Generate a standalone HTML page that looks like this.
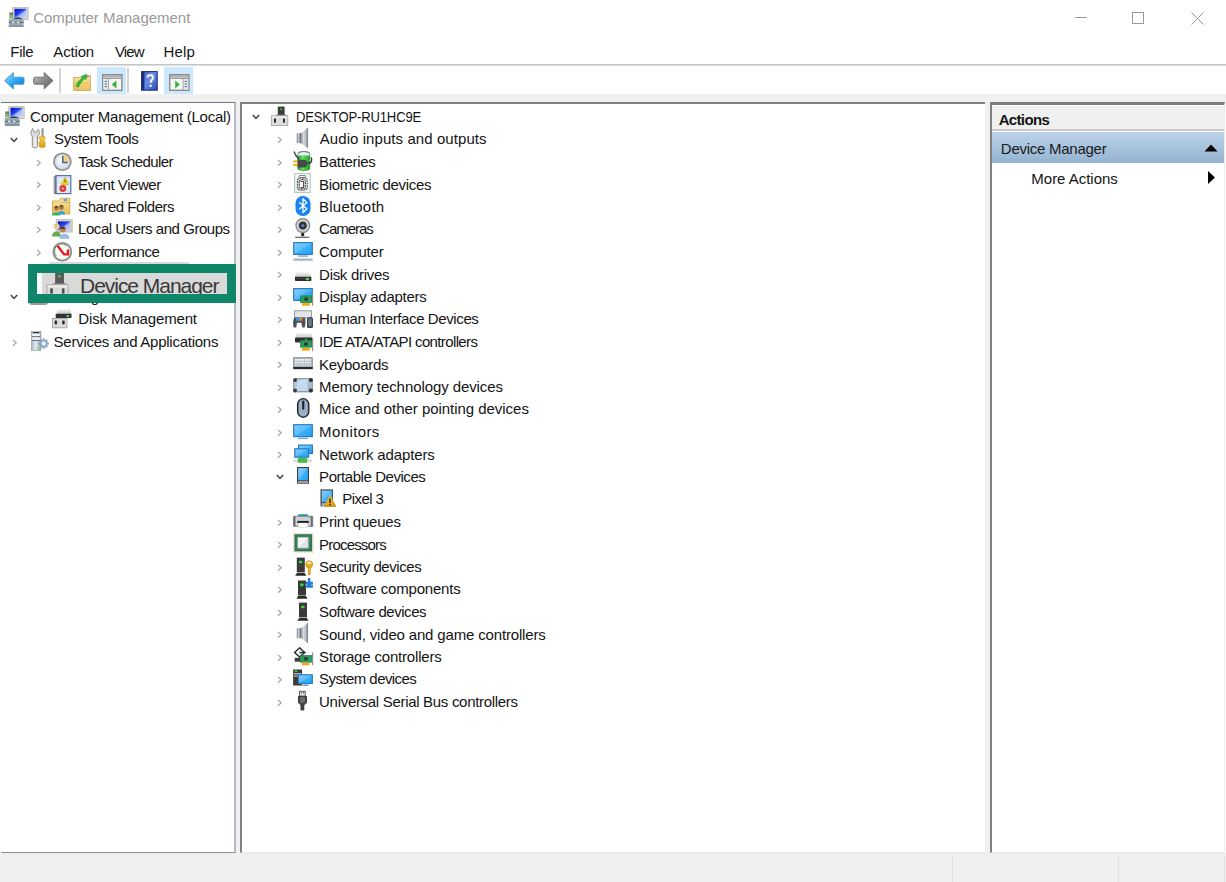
<!DOCTYPE html><html><head><meta charset="utf-8"><style>
html,body{margin:0;padding:0}
body{width:1226px;height:882px;position:relative;overflow:hidden;background:#fff;font-family:"Liberation Sans",sans-serif}
svg{display:block}
</style></head><body>
<svg width="0" height="0" style="position:absolute"><defs>
<linearGradient id="gScr" x1="0" y1="0" x2="1" y2="1"><stop offset="0" stop-color="#0008c8"/><stop offset="0.45" stop-color="#2848e8"/><stop offset="0.6" stop-color="#a8b8ff"/><stop offset="1" stop-color="#c8d4ff"/></linearGradient>
<linearGradient id="gMon" x1="0" y1="0" x2="1" y2="1"><stop offset="0" stop-color="#88d0ff"/><stop offset="0.5" stop-color="#5cbcfc"/><stop offset="0.52" stop-color="#40b0fa"/><stop offset="1" stop-color="#1ea0f4"/></linearGradient>
<linearGradient id="gSpk" x1="0" x2="1"><stop offset="0" stop-color="#8a9098"/><stop offset="0.35" stop-color="#d8dce0"/><stop offset="0.7" stop-color="#b8bcc0"/><stop offset="1" stop-color="#70767c"/></linearGradient>
<linearGradient id="gSpkB" x1="0" x2="1"><stop offset="0" stop-color="#6a7078"/><stop offset="0.4" stop-color="#c8d0d8"/><stop offset="1" stop-color="#5a6068"/></linearGradient>
<linearGradient id="gBat" x1="0" x2="1"><stop offset="0" stop-color="#2a9a30"/><stop offset="0.4" stop-color="#60e060"/><stop offset="1" stop-color="#20a028"/></linearGradient>
<linearGradient id="gGold" x1="0" y1="0" x2="0" y2="1"><stop offset="0" stop-color="#f8d048"/><stop offset="1" stop-color="#d89a10"/></linearGradient>
<linearGradient id="gBack" x1="0" y1="0" x2="1" y2="1"><stop offset="0" stop-color="#a8e4ff"/><stop offset="0.5" stop-color="#30a8f0"/><stop offset="1" stop-color="#0a70d0"/></linearGradient>
<linearGradient id="gFwd" x1="0" y1="0" x2="1" y2="1"><stop offset="0" stop-color="#c8c8c8"/><stop offset="0.5" stop-color="#8a8a8a"/><stop offset="1" stop-color="#5a5a5a"/></linearGradient>
<linearGradient id="gFold" x1="0" y1="0" x2="0" y2="1"><stop offset="0" stop-color="#fbe49a"/><stop offset="1" stop-color="#e8c060"/></linearGradient>
<linearGradient id="gHelp" x1="0" y1="0" x2="1" y2="1"><stop offset="0" stop-color="#3a60d0"/><stop offset="0.45" stop-color="#6a8ce8"/><stop offset="1" stop-color="#2a4ab8"/></linearGradient>
<linearGradient id="gSrv" x1="0" x2="1"><stop offset="0" stop-color="#a8b4c0"/><stop offset="0.5" stop-color="#e4eaf0"/><stop offset="1" stop-color="#98a4b0"/></linearGradient>
<linearGradient id="gDisk" x1="0" y1="0" x2="0" y2="1"><stop offset="0" stop-color="#f0f0f0"/><stop offset="1" stop-color="#c8c8c8"/></linearGradient>
<radialGradient id="gFace" cx="0.4" cy="0.4" r="0.7"><stop offset="0" stop-color="#f8fcff"/><stop offset="1" stop-color="#c8d8e8"/></radialGradient>
</defs></svg>
<div style="position:absolute;left:8px;top:7px;line-height:0"><svg width="21" height="21" viewBox="0 0 21 21">
<rect x="4.8" y="0.5" width="15.4" height="12" fill="#dcd8cc" stroke="#bcb8ac" stroke-width="0.8"/>
<rect x="6.5" y="1.8" width="12" height="9" fill="url(#gScr)"/>
<rect x="1.3" y="5.4" width="3.8" height="5.8" fill="#7a7a7a"/>
<rect x="1.5" y="8.3" width="3" height="2.2" fill="#70e070"/>
<path d="M6 12.2 Q10 10.2 14 12.2" stroke="#1a1a1a" stroke-width="1.6" fill="none"/>
<rect x="0.8" y="11.8" width="14.8" height="8" rx="0.6" fill="#9aaab6"/>
<rect x="0.8" y="14.6" width="14.8" height="1.6" fill="#6a7a86"/>
<rect x="4" y="14.6" width="2.4" height="1.6" fill="#e0e8ee"/>
<rect x="9" y="14.6" width="2.4" height="1.6" fill="#e0e8ee"/>
<rect x="0.8" y="18.4" width="14.8" height="1.4" fill="#7a8a96"/>
</svg></div>
<span id="title" style="position:absolute;left:33.179999999999986px;top:10px;font-size:15px;line-height:15px;color:#999999;font-weight:normal;letter-spacing:-0.025px;white-space:nowrap;">Computer Management</span>
<div style="position:absolute;left:1075px;top:17px;width:12px;height:1px;background:#999"></div>
<div style="position:absolute;left:1132px;top:12px;width:12px;height:12px;border:1px solid #999;box-sizing:border-box"></div>
<svg style="position:absolute;left:1191px;top:12px" width="13" height="13" viewBox="0 0 13 13"><path d="M0.5 0.5 L12.5 12.5 M12.5 0.5 L0.5 12.5" stroke="#999" stroke-width="1"/></svg>
<span id="m_file" style="position:absolute;left:10.280000000000005px;top:44px;font-size:15px;line-height:15px;color:#141414;font-weight:normal;letter-spacing:-0.300px;white-space:nowrap;">File</span>
<span id="m_action" style="position:absolute;left:53.359999999999964px;top:44px;font-size:15px;line-height:15px;color:#141414;font-weight:normal;letter-spacing:-0.180px;white-space:nowrap;">Action</span>
<span id="m_view" style="position:absolute;left:114.9px;top:44px;font-size:15px;line-height:15px;color:#141414;font-weight:normal;letter-spacing:-0.840px;white-space:nowrap;">View</span>
<span id="m_help" style="position:absolute;left:163.46000000000012px;top:44px;font-size:15px;line-height:15px;color:#141414;font-weight:normal;letter-spacing:0.180px;white-space:nowrap;">Help</span>
<div style="position:absolute;left:0px;top:64px;width:1226px;height:1px;background:#c4c4c4"></div>
<div style="position:absolute;left:0px;top:65px;width:1226px;height:1px;background:#dedede"></div>
<div style="position:absolute;left:4px;top:72px;line-height:0"><svg width="21" height="18" viewBox="0 0 21 18">
<path d="M0.6 8.6 L9.4 0.6 L9.4 5.2 L18.6 5.2 C19.8 5.2 20 6 20 7 L20 10.4 C20 11.4 19.8 12.2 18.6 12.2 L9.4 12.2 L9.4 17 Z" fill="url(#gBack)" stroke="#3c94d8" stroke-width="0.9"/>
</svg></div>
<div style="position:absolute;left:33px;top:72px;line-height:0"><svg width="21" height="18" viewBox="0 0 21 18">
<path d="M20 8.6 L11.2 0.6 L11.2 5.2 L2 5.2 C0.8 5.2 0.6 6 0.6 7 L0.6 10.4 C0.6 11.4 0.8 12.2 2 12.2 L11.2 12.2 L11.2 17 Z" fill="url(#gFwd)" stroke="#6a6a6a" stroke-width="0.9"/>
</svg></div>
<div style="position:absolute;left:59px;top:68px;width:2px;height:25px;background:#d4d4d4"></div>
<div style="position:absolute;left:73px;top:73px;line-height:0"><svg width="18" height="18" viewBox="0 0 18 18">
<path d="M0.6 4.4 L9.8 4.4 L10.8 2.6 L17.6 2.6 L17.6 17.4 L0.6 17.4 Z" fill="url(#gFold)" stroke="#c8a040" stroke-width="0.8"/>
<path d="M0.6 10 L17.6 10" stroke="#e0b858" stroke-width="0.8"/>
<path d="M2.8 13.2 C4 9.6 6.4 6.8 9.4 5 L8.2 3.2 L14 1.2 L13 6.8 L11.6 5.6 C9.2 7.8 7.2 10.6 5.4 14.2 Z" fill="#30b830" stroke="#209020" stroke-width="0.4"/>
<ellipse cx="14.6" cy="3.6" rx="1.8" ry="0.7" fill="#4a90e0"/>
</svg></div>
<div style="position:absolute;left:97px;top:67px;width:29px;height:27px;background:#cce8ff"></div>
<div style="position:absolute;left:101.5px;top:74px;line-height:0"><svg width="21" height="17" viewBox="0 0 21 17"><rect x="0.7" y="0.7" width="19.2" height="15.6" fill="#f6f6f6" stroke="#8a8a8a" stroke-width="1.4"/>
<rect x="1.4" y="1.6" width="17.8" height="1" fill="#8a8a8a"/>
<rect x="1.4" y="3.4" width="17.8" height="1.6" fill="#a0a0a0"/>
<rect x="1.4" y="5" width="4.6" height="10.6" fill="#e6e6e6"/><rect x="6" y="5" width="0.9" height="10.6" fill="#9a9a9a"/>
<path d="M2.6 7.4 h2.4 M2.6 10 h2.4 M2.6 12.6 h2.4" stroke="#4a78b8" stroke-width="1"/>
<path d="M14.4 6.4 L9.8 10.4 L14.4 14.4 Z" fill="#38b038"/>
</svg></div>
<div style="position:absolute;left:127px;top:68px;width:2px;height:25px;background:#d4d4d4"></div>
<div style="position:absolute;left:140.5px;top:70.8px;line-height:0"><svg width="17" height="20" viewBox="0 0 17 20">
<rect x="0.6" y="0.6" width="15.6" height="18.6" fill="url(#gHelp)" stroke="#182870" stroke-width="1"/>
<rect x="1" y="1" width="2.4" height="17.8" fill="#1a2c80"/>
<path d="M6.4 6.4 C6.4 3.4 12 3.2 12 6.4 C12 8.6 9.6 8.8 9.6 11.8" stroke="#8890b0" stroke-width="2" fill="none" transform="translate(0.6,0.6)"/>
<path d="M6.4 6.4 C6.4 3.4 12 3.2 12 6.4 C12 8.6 9.6 8.8 9.6 11.8" stroke="#f8f8ff" stroke-width="1.9" fill="none"/>
<rect x="8.6" y="13.8" width="2.1" height="2.1" fill="#f8f8ff"/>
</svg></div>
<div style="position:absolute;left:164px;top:67px;width:29px;height:27px;background:#cce8ff"></div>
<div style="position:absolute;left:169px;top:74px;line-height:0"><svg width="21" height="17" viewBox="0 0 21 17"><rect x="0.7" y="0.7" width="19.2" height="15.6" fill="#f6f6f6" stroke="#8a8a8a" stroke-width="1.4"/>
<rect x="1.4" y="1.6" width="17.8" height="1" fill="#8a8a8a"/>
<rect x="1.4" y="3.4" width="17.8" height="1.6" fill="#a0a0a0"/>
<rect x="14.6" y="5" width="4.6" height="10.6" fill="#e6e6e6"/><rect x="13.7" y="5" width="0.9" height="10.6" fill="#9a9a9a"/>
<path d="M15.6 7.4 h2.4 M15.6 10 h2.4 M15.6 12.6 h2.4" stroke="#4a78b8" stroke-width="1"/>
<path d="M6.2 6.4 L10.8 10.4 L6.2 14.4 Z" fill="#38b038"/>
</svg></div>
<div style="position:absolute;left:0px;top:94px;width:1226px;height:8px;background:#f0f0f0"></div>
<div style="position:absolute;left:1px;top:102px;width:235px;height:751px;border-top:1px solid #6c7684;border-bottom:1px solid #8a909a;border-right:2px solid #b4bac2;box-sizing:border-box;background:#fff"></div>
<div style="position:absolute;left:236px;top:102px;width:4px;height:751px;background:#f0f0f0"></div>
<div style="position:absolute;left:4px;top:106px;line-height:0"><svg width="21" height="21" viewBox="0 0 21 21">
<rect x="4.8" y="0.5" width="15.4" height="12" fill="#dcd8cc" stroke="#bcb8ac" stroke-width="0.8"/>
<rect x="6.5" y="1.8" width="12" height="9" fill="url(#gScr)"/>
<rect x="1.3" y="5.4" width="3.8" height="5.8" fill="#7a7a7a"/>
<rect x="1.5" y="8.3" width="3" height="2.2" fill="#70e070"/>
<path d="M6 12.2 Q10 10.2 14 12.2" stroke="#1a1a1a" stroke-width="1.6" fill="none"/>
<rect x="0.8" y="11.8" width="14.8" height="8" rx="0.6" fill="#9aaab6"/>
<rect x="0.8" y="14.6" width="14.8" height="1.6" fill="#6a7a86"/>
<rect x="4" y="14.6" width="2.4" height="1.6" fill="#e0e8ee"/>
<rect x="9" y="14.6" width="2.4" height="1.6" fill="#e0e8ee"/>
<rect x="0.8" y="18.4" width="14.8" height="1.4" fill="#7a8a96"/>
</svg></div>
<span id="l0" style="position:absolute;left:30.1px;top:109px;font-size:15px;line-height:15px;color:#141414;font-weight:normal;letter-spacing:-0.253px;white-space:nowrap;">Computer Management (Local)</span>
<svg style="position:absolute;left:10px;top:137px" width="8" height="6" viewBox="0 0 8 6"><path d="M0.8 1 L4 4.4 L7.2 1" stroke="#404040" stroke-width="1.5" fill="none"/></svg>
<div style="position:absolute;left:30px;top:128px;line-height:0"><svg width="21" height="21" viewBox="0 0 21 21">
<path d="M2.3 8 C0.4 6.5 0.5 2.3 2.8 0.6 L3.8 3.6 L6.2 4.4 L8 1.4 C10 2.6 10.2 6.6 7.6 8 L7.6 18.6 C7.6 20.2 2.3 20.2 2.3 18.6 Z" fill="#dcdcdc" stroke="#8c8c8c" stroke-width="1"/>
<rect x="4.2" y="9" width="1.4" height="9.5" fill="#f4f4f4"/>
<rect x="11.4" y="0.3" width="2.3" height="9" fill="#9a9a9a"/>
<path d="M9.2 8.8 L15.1 8.8 L15.1 10.8 L13.7 12.5 L15.1 14 L15.1 18.6 C15.1 19.8 9.2 19.8 9.2 18.6 L9.2 14 L10.6 12.5 L9.2 10.8 Z" fill="url(#gGold)" stroke="#d09000" stroke-width="0.6"/>
</svg></div>
<span id="l1" style="position:absolute;left:54.1px;top:131px;font-size:15px;line-height:15px;color:#141414;font-weight:normal;letter-spacing:-0.385px;white-space:nowrap;">System Tools</span>
<svg style="position:absolute;left:35.5px;top:158.6px" width="6" height="8" viewBox="0 0 6 8"><path d="M1 0.9 L4.2 3.8 L1 6.7" stroke="#a6a6a6" stroke-width="1.25" fill="none"/></svg>
<div style="position:absolute;left:52px;top:152px;line-height:0"><svg width="21" height="21" viewBox="0 0 21 21">
<circle cx="10.4" cy="9.7" r="9.3" fill="#8c8c8c"/>
<circle cx="10.4" cy="9.7" r="7.7" fill="#c8ccd0"/>
<circle cx="10.4" cy="9.7" r="7" fill="url(#gFace)"/>
<path d="M10.4 9.7 L10.4 2.7 A7 7 0 0 1 17.4 9.7 Z" fill="#f0d084"/>
<path d="M10.8 4 L10.8 10.6 L15.6 10.6" stroke="#4a6078" stroke-width="1.5" fill="none"/>
</svg></div>
<span id="l2" style="position:absolute;left:78.28000000000007px;top:154px;font-size:15px;line-height:15px;color:#141414;font-weight:normal;letter-spacing:-0.554px;white-space:nowrap;">Task Scheduler</span>
<svg style="position:absolute;left:35.5px;top:181.1px" width="6" height="8" viewBox="0 0 6 8"><path d="M1 0.9 L4.2 3.8 L1 6.7" stroke="#a6a6a6" stroke-width="1.25" fill="none"/></svg>
<div style="position:absolute;left:52px;top:174px;line-height:0"><svg width="21" height="21" viewBox="0 0 21 21">
<rect x="3.8" y="1.6" width="15" height="18" fill="#d4e2f2" stroke="#5870b0" stroke-width="1.2"/>
<path d="M5 5.5 h13 M5 8 h13 M5 10.5 h13 M5 13 h13 M5 15.5 h13 M5 18 h13" stroke="#f4f8fc" stroke-width="0.8"/>
<path d="M1.5 3 h3 M1.5 5 h3 M1.5 7 h3 M1.5 9 h3 M1.5 11 h3 M1.5 13 h3 M1.5 15 h3 M1.5 17 h3 M1.5 19 h3" stroke="#505050" stroke-width="1"/>
<path d="M13 3.4 L16.8 10.4 L9.2 10.4 Z" fill="#f4d818" stroke="#c8a800" stroke-width="0.6"/>
<rect x="12.5" y="5.6" width="1" height="2.8" fill="#404000"/>
<circle cx="10.8" cy="14.5" r="3.4" fill="#e03838"/>
<rect x="9.6" y="13.8" width="2.4" height="1.4" fill="#f8c8c8"/>
</svg></div>
<span id="l3" style="position:absolute;left:78.1px;top:177px;font-size:15px;line-height:15px;color:#141414;font-weight:normal;letter-spacing:-0.458px;white-space:nowrap;">Event Viewer</span>
<svg style="position:absolute;left:35.5px;top:203.6px" width="6" height="8" viewBox="0 0 6 8"><path d="M1 0.9 L4.2 3.8 L1 6.7" stroke="#a6a6a6" stroke-width="1.25" fill="none"/></svg>
<div style="position:absolute;left:52px;top:196px;line-height:0"><svg width="21" height="21" viewBox="0 0 21 21">
<path d="M0.5 5 L7 5 L8.5 2.2 L17.8 2.2 L17.8 18 L0.5 18 Z" fill="url(#gFold)" stroke="#d0a848" stroke-width="0.9"/>
<path d="M8.5 6.4 L17.8 6.4" stroke="#d8b050" stroke-width="0.8"/>
<ellipse cx="13" cy="4.1" rx="2.8" ry="1.1" fill="#5a9ae8"/>
<ellipse cx="10.8" cy="4.1" rx="1.2" ry="0.7" fill="#fff"/>
<circle cx="9.4" cy="11.6" r="2.4" fill="#b07848"/>
<path d="M7 10.6 Q9.4 7.6 11.8 10.6" fill="#3a2a1a"/>
<path d="M5.8 18.4 C5.8 14 13 14 13 18.4 Z" fill="#3aa0d8"/>
<circle cx="4.4" cy="12.4" r="2.4" fill="#b07848"/>
<path d="M2 11.4 Q4.4 8.4 6.8 11.4" fill="#3a2a1a"/>
<path d="M0 19.6 C0 15 8 15 8 19.6 Z" fill="#38b070"/>
</svg></div>
<span id="l4" style="position:absolute;left:78.1px;top:199px;font-size:15px;line-height:15px;color:#141414;font-weight:normal;letter-spacing:-0.471px;white-space:nowrap;">Shared Folders</span>
<svg style="position:absolute;left:35.5px;top:226.1px" width="6" height="8" viewBox="0 0 6 8"><path d="M1 0.9 L4.2 3.8 L1 6.7" stroke="#a6a6a6" stroke-width="1.25" fill="none"/></svg>
<div style="position:absolute;left:52px;top:219px;line-height:0"><svg width="21" height="21" viewBox="0 0 21 21">
<rect x="4.2" y="0.5" width="16" height="12.6" fill="#d4d0c4" stroke="#c0bcb0" stroke-width="0.8"/>
<rect x="5.9" y="2.4" width="12.2" height="8.9" fill="url(#gScr)"/>
<circle cx="4.6" cy="7.4" r="3" fill="#f0cc98"/>
<path d="M1.6 6.8 Q4.6 2.8 7.6 6.8 Z" fill="#d8c070"/>
<path d="M0 17.6 C0 10.8 9 10.8 9 17.6 Z" fill="#6aaa50"/>
<circle cx="10.8" cy="10.4" r="3" fill="#c08050"/>
<path d="M7.8 9.8 Q10.8 5.8 13.8 9.8 Z" fill="#3a2a1a"/>
<path d="M7.4 19.8 C7.4 13.2 17.6 13.2 17.6 19.8 Z" fill="#98bce4"/>
</svg></div>
<span id="l5" style="position:absolute;left:78.1px;top:221px;font-size:15px;line-height:15px;color:#141414;font-weight:normal;letter-spacing:-0.467px;white-space:nowrap;">Local Users and Groups</span>
<svg style="position:absolute;left:35.5px;top:248.6px" width="6" height="8" viewBox="0 0 6 8"><path d="M1 0.9 L4.2 3.8 L1 6.7" stroke="#a6a6a6" stroke-width="1.25" fill="none"/></svg>
<div style="position:absolute;left:52px;top:242px;line-height:0"><svg width="21" height="21" viewBox="0 0 21 21">
<circle cx="10.3" cy="9.8" r="9.8" fill="#8c8c8c"/>
<circle cx="10.3" cy="9.8" r="8.2" fill="#d8d8d0"/>
<circle cx="10.3" cy="9.8" r="7.3" fill="#fbfbf8"/>
<path d="M4.3 13.8 A6.4 6.4 0 0 1 14.8 4.2" stroke="#4a9060" stroke-width="1.3" fill="none" stroke-dasharray="1.2 0.8"/>
<path d="M5.6 3.8 L12 12.4 L16 12.4 L16 7.4" stroke="#e81818" stroke-width="2.4" fill="none"/>
</svg></div>
<span id="l6" style="position:absolute;left:78.1px;top:244px;font-size:15px;line-height:15px;color:#141414;font-weight:normal;letter-spacing:-0.414px;white-space:nowrap;">Performance</span>
<div style="position:absolute;left:49px;top:262px;width:140px;height:23px;background:#d9d9d9"></div>
<div style="position:absolute;left:52px;top:264px;line-height:0"><svg width="21" height="21" viewBox="0 0 21 21">
<rect x="7.8" y="0.6" width="6.8" height="8.6" fill="#3a3a3a"/>
<rect x="10.2" y="2.4" width="1.8" height="1.8" fill="#30d030"/>
<path d="M4.5 10 L6.8 8.6 L15.6 8.6 L17.8 10 Z" fill="#6a6a6a"/>
<rect x="1.4" y="9.8" width="16.4" height="9.8" fill="#dcdcdc" stroke="#a8a8a8" stroke-width="0.9"/>
<rect x="2" y="10.4" width="15.2" height="1.4" fill="#f2f2f2"/>
<rect x="4" y="12.6" width="2" height="4" fill="#2a2a2a"/>
<rect x="13" y="12.6" width="2" height="4" fill="#2a2a2a"/>
</svg></div>
<span id="l7" style="position:absolute;left:79px;top:267px;font-size:15px;line-height:15px;color:#141414;font-weight:normal;letter-spacing:0.000px;white-space:nowrap;">Device Manager</span>
<svg style="position:absolute;left:10px;top:294px" width="8" height="6" viewBox="0 0 8 6"><path d="M0.8 1 L4 4.4 L7.2 1" stroke="#404040" stroke-width="1.5" fill="none"/></svg>
<div style="position:absolute;left:29px;top:286px;width:19px;height:19px;background:#9a9a9a;border-radius:3px"></div>
<span id="l8" style="position:absolute;left:55px;top:289px;font-size:15px;line-height:15px;color:#141414;font-weight:normal;letter-spacing:0.000px;white-space:nowrap;">Storage</span>
<div style="position:absolute;left:52px;top:309px;line-height:0"><svg width="21" height="21" viewBox="0 0 21 21">
<path d="M4.6 4.9 L5.6 0.4 L18.6 0.4 L19.5 4.9 Z" fill="url(#gDisk)"/>
<rect x="3.7" y="4.8" width="15.8" height="4.2" rx="0.8" fill="#303030"/>
<ellipse cx="15.8" cy="7" rx="1.8" ry="1" fill="#40d840"/>
<rect x="0.5" y="9.4" width="14.4" height="9.4" fill="#dcdce0" stroke="#a0a0a4" stroke-width="0.9"/>
<rect x="2.6" y="11.6" width="2.5" height="3.8" rx="0.8" fill="#2a2a2a"/>
<rect x="10.2" y="11.6" width="2.5" height="3.8" rx="0.8" fill="#2a2a2a"/>
</svg></div>
<span id="l9" style="position:absolute;left:78.36999999999993px;top:311px;font-size:15px;line-height:15px;color:#141414;font-weight:normal;letter-spacing:-0.161px;white-space:nowrap;">Disk Management</span>
<svg style="position:absolute;left:12px;top:338.6px" width="6" height="8" viewBox="0 0 6 8"><path d="M1 0.9 L4.2 3.8 L1 6.7" stroke="#a6a6a6" stroke-width="1.25" fill="none"/></svg>
<div style="position:absolute;left:31px;top:331px;line-height:0"><svg width="21" height="21" viewBox="0 0 21 21">
<rect x="0.2" y="0" width="9.8" height="19.6" fill="url(#gSrv)" stroke="#909ca8" stroke-width="0.6"/>
<rect x="2" y="0.9" width="6.2" height="1.4" rx="0.6" fill="#1a3a4a"/>
<rect x="1.2" y="2.9" width="7.8" height="2" fill="#eef4f8"/>
<rect x="1.2" y="5.2" width="7.8" height="0.9" fill="#606a74"/>
<rect x="1.2" y="6.6" width="7.8" height="2" fill="#eef4f8"/>
<rect x="1.2" y="9" width="7.8" height="0.9" fill="#606a74"/>
<rect x="6" y="16.4" width="3" height="2" fill="#70e070"/>
<path d="M12 7.8 L13.4 7.8 L13.9 9.6 L15.6 8.6 L16.6 9.6 L15.6 11.3 L17.6 11.8 L17.6 13.3 L15.6 13.8 L16.6 15.5 L15.6 16.5 L13.9 15.5 L13.4 17.5 L12 17.5 L11.5 15.5 L9.8 16.5 L8.8 15.5 L9.8 13.8 L7.8 13.3 L7.8 11.8 L9.8 11.3 L8.8 9.6 L9.8 8.6 L11.5 9.6 Z" fill="#90acc8" stroke="#7898b8" stroke-width="0.5"/>
<circle cx="12.7" cy="12.6" r="2" fill="#f0f4f8"/>
</svg></div>
<span id="l10" style="position:absolute;left:53.55999999999997px;top:334px;font-size:15px;line-height:15px;color:#141414;font-weight:normal;letter-spacing:-0.251px;white-space:nowrap;">Services and Applications</span>
<div style="position:absolute;left:240px;top:102px;width:746px;height:751px;border-top:2px solid #808080;border-left:2px solid #808080;border-right:1px solid #e6e6e6;border-bottom:1px solid #e6e6e6;box-sizing:border-box;background:#fff"></div>
<svg style="position:absolute;left:252px;top:114px" width="8" height="6" viewBox="0 0 8 6"><path d="M0.8 1 L4 4.4 L7.2 1" stroke="#404040" stroke-width="1.5" fill="none"/></svg>
<div style="position:absolute;left:270px;top:106px;line-height:0"><svg width="21" height="21" viewBox="0 0 21 21">
<rect x="7.8" y="0.6" width="6.8" height="8.6" fill="#3a3a3a"/>
<rect x="10.2" y="2.4" width="1.8" height="1.8" fill="#30d030"/>
<path d="M4.5 10 L6.8 8.6 L15.6 8.6 L17.8 10 Z" fill="#6a6a6a"/>
<rect x="1.4" y="9.8" width="16.4" height="9.8" fill="#dcdcdc" stroke="#a8a8a8" stroke-width="0.9"/>
<rect x="2" y="10.4" width="15.2" height="1.4" fill="#f2f2f2"/>
<rect x="4" y="12.6" width="2" height="4" fill="#2a2a2a"/>
<rect x="13" y="12.6" width="2" height="4" fill="#2a2a2a"/>
</svg></div>
<span id="c0" style="position:absolute;left:295.6399999999999px;top:109px;font-size:15px;line-height:15px;color:#141414;font-weight:normal;letter-spacing:-0.200px;white-space:nowrap;transform:scaleX(0.872);transform-origin:0 0;">DESKTOP-RU1HC9E</span>
<svg style="position:absolute;left:277px;top:136.1px" width="6" height="8" viewBox="0 0 6 8"><path d="M1 0.9 L4.2 3.8 L1 6.7" stroke="#a6a6a6" stroke-width="1.25" fill="none"/></svg>
<div style="position:absolute;left:293px;top:128px;line-height:0"><svg width="21" height="21" viewBox="0 0 21 21">
<rect x="3.8" y="5.2" width="4.2" height="10" fill="url(#gSpkB)"/>
<path d="M7.9 5.2 L14.6 0.1 L15 0.1 L15 19.9 L14.6 19.9 L7.9 15.2 Z" fill="url(#gSpk)"/>
<rect x="14.2" y="0.1" width="0.9" height="19.8" fill="#8a9096"/>
</svg></div>
<span id="c1" style="position:absolute;left:319.72999999999973px;top:131px;font-size:15px;line-height:15px;color:#141414;font-weight:normal;letter-spacing:0.074px;white-space:nowrap;">Audio inputs and outputs</span>
<svg style="position:absolute;left:277px;top:158.6px" width="6" height="8" viewBox="0 0 6 8"><path d="M1 0.9 L4.2 3.8 L1 6.7" stroke="#a6a6a6" stroke-width="1.25" fill="none"/></svg>
<div style="position:absolute;left:293px;top:151px;line-height:0"><svg width="21" height="21" viewBox="0 0 21 21">
<path d="M4.8 3.2 C4.8 -0.6 16.8 -0.6 16.8 3.2 L16.8 17.4 C16.8 20.2 4.8 20.2 4.8 17.4 Z" fill="url(#gBat)" stroke="#1a8020" stroke-width="0.6"/>
<path d="M5 3.6 C5 0.2 16.6 0.2 16.6 3.6 L16.6 4.6 L5 4.6 Z" fill="#ecebf8"/>
<path d="M5 1.5 Q10.8 -0.6 16.6 1.5" stroke="#8080b0" stroke-width="0.8" fill="none"/>
<path d="M1 0.5 Q2.5 5 6 8.5" stroke="#404040" stroke-width="1.3" fill="none"/>
<rect x="0.2" y="9.4" width="4.8" height="2.1" fill="#e8b818"/>
<rect x="0.2" y="13" width="4.8" height="2.2" fill="#e8b818"/>
<path d="M4.6 8.8 L11 8.8 C13.6 8.8 14.4 10.8 14.4 12.6 C14.4 14.6 13.4 16.6 11 16.6 L4.6 16.6 Z" fill="#48484a"/>
<path d="M14.2 12.4 C19 12.4 19.6 9 18 6.4" stroke="#3a3a3a" stroke-width="1.4" fill="none"/>
</svg></div>
<span id="c2" style="position:absolute;left:319.1px;top:154px;font-size:15px;line-height:15px;color:#141414;font-weight:normal;letter-spacing:-0.304px;white-space:nowrap;">Batteries</span>
<svg style="position:absolute;left:277px;top:181.1px" width="6" height="8" viewBox="0 0 6 8"><path d="M1 0.9 L4.2 3.8 L1 6.7" stroke="#a6a6a6" stroke-width="1.25" fill="none"/></svg>
<div style="position:absolute;left:293px;top:173px;line-height:0"><svg width="21" height="21" viewBox="0 0 21 21">
<rect x="1.6" y="0.5" width="15.6" height="19" fill="#f6f6f6" stroke="#b4ccc4" stroke-width="1.2"/>
<ellipse cx="9.3" cy="3.6" rx="3.8" ry="1.2" fill="none" stroke="#707070" stroke-width="0.9"/>
<path d="M4.4 7 C4.4 4 14.2 4 14.2 7 L14.2 15 C14.2 18 4.4 18 4.4 15 Z" fill="none" stroke="#505050" stroke-width="1.1" stroke-dasharray="2.2 0.6"/>
<path d="M6.2 8 C6.2 6 12.4 6 12.4 8 L12.4 14.4 C12.4 16.4 6.2 16.4 6.2 14.4 Z" fill="none" stroke="#4a4a4a" stroke-width="1.1" stroke-dasharray="2.2 0.6"/>
<path d="M8 9 C8 8 10.6 8 10.6 9 L10.6 14 C10.6 15 8 15 8 14" fill="none" stroke="#484848" stroke-width="1.1"/>
</svg></div>
<span id="c3" style="position:absolute;left:319.1px;top:177px;font-size:15px;line-height:15px;color:#141414;font-weight:normal;letter-spacing:-0.326px;white-space:nowrap;">Biometric devices</span>
<svg style="position:absolute;left:277px;top:203.6px" width="6" height="8" viewBox="0 0 6 8"><path d="M1 0.9 L4.2 3.8 L1 6.7" stroke="#a6a6a6" stroke-width="1.25" fill="none"/></svg>
<div style="position:absolute;left:293px;top:196px;line-height:0"><svg width="21" height="21" viewBox="0 0 21 21">
<rect x="2.5" y="0" width="15" height="20" rx="7.2" fill="#1a84f4"/>
<path d="M6.2 6.2 L13.8 12.8 L10 16.6 L10 2.6 L13.8 6.6 L6.2 13.2" stroke="#fff" stroke-width="1.3" fill="none" stroke-linejoin="round"/>
</svg></div>
<span id="c4" style="position:absolute;left:319.1px;top:199px;font-size:15px;line-height:15px;color:#141414;font-weight:normal;letter-spacing:0.203px;white-space:nowrap;">Bluetooth</span>
<svg style="position:absolute;left:277px;top:226.1px" width="6" height="8" viewBox="0 0 6 8"><path d="M1 0.9 L4.2 3.8 L1 6.7" stroke="#a6a6a6" stroke-width="1.25" fill="none"/></svg>
<div style="position:absolute;left:293px;top:218px;line-height:0"><svg width="21" height="21" viewBox="0 0 21 21">
<circle cx="9.8" cy="7.6" r="7.5" fill="#8a8a8a"/>
<circle cx="9.8" cy="7.6" r="6.1" fill="#dcdcdc"/>
<circle cx="9.8" cy="7.6" r="4.9" fill="#b0b0b0"/>
<circle cx="9.8" cy="7.6" r="3.8" fill="#2e2e2e"/>
<circle cx="9.8" cy="7.6" r="1.6" fill="#4a80d0"/>
<rect x="8.2" y="15" width="3" height="3.2" fill="#2a2a2a"/>
<rect x="2.2" y="18.7" width="14.2" height="1.2" fill="#606060"/>
</svg></div>
<span id="c5" style="position:absolute;left:319.1px;top:221px;font-size:15px;line-height:15px;color:#141414;font-weight:normal;letter-spacing:-1.035px;white-space:nowrap;">Cameras</span>
<svg style="position:absolute;left:277px;top:248.6px" width="6" height="8" viewBox="0 0 6 8"><path d="M1 0.9 L4.2 3.8 L1 6.7" stroke="#a6a6a6" stroke-width="1.25" fill="none"/></svg>
<div style="position:absolute;left:293px;top:242px;line-height:0"><svg width="21" height="21" viewBox="0 0 21 21"><rect x="0.7" y="0.6" width="18.6" height="11.8" fill="url(#gMon)" stroke="#2a7cc0" stroke-width="1.2"/>
<rect x="5" y="13.5" width="10" height="1.1" fill="#6a84a8"/>
<rect x="0.2" y="16.6" width="19.6" height="2.2" rx="1" fill="#a4b4c8"/>
</svg></div>
<span id="c6" style="position:absolute;left:319.1px;top:244px;font-size:15px;line-height:15px;color:#141414;font-weight:normal;letter-spacing:-0.167px;white-space:nowrap;">Computer</span>
<svg style="position:absolute;left:277px;top:271.1px" width="6" height="8" viewBox="0 0 6 8"><path d="M1 0.9 L4.2 3.8 L1 6.7" stroke="#a6a6a6" stroke-width="1.25" fill="none"/></svg>
<div style="position:absolute;left:293px;top:272px;line-height:0"><svg width="21" height="10" viewBox="0 0 21 10">
<path d="M1.9 5.2 L3 0.3 L17 0.3 L18.4 5.2 Z" fill="url(#gDisk)"/>
<rect x="1.9" y="4.8" width="16.5" height="4.3" rx="1" fill="#2e2e2e"/>
<rect x="3" y="6.2" width="9" height="0.5" fill="#484848"/>
<ellipse cx="14.4" cy="7" rx="1.9" ry="1.2" fill="#40d840"/>
</svg></div>
<span id="c7" style="position:absolute;left:319.1px;top:267px;font-size:15px;line-height:15px;color:#141414;font-weight:normal;letter-spacing:-0.297px;white-space:nowrap;">Disk drives</span>
<svg style="position:absolute;left:277px;top:293.6px" width="6" height="8" viewBox="0 0 6 8"><path d="M1 0.9 L4.2 3.8 L1 6.7" stroke="#a6a6a6" stroke-width="1.25" fill="none"/></svg>
<div style="position:absolute;left:293px;top:288px;line-height:0"><svg width="21" height="21" viewBox="0 0 21 21"><rect x="0.7" y="0.6" width="18.6" height="11.8" fill="url(#gMon)" stroke="#2a7cc0" stroke-width="1.2"/><rect x="7.6" y="7.9" width="11.4" height="6.8" fill="#2a9a58" stroke="#1a7a40" stroke-width="0.6"/>
<rect x="11.4" y="9.6" width="3.4" height="3" fill="#303030"/>
<rect x="9" y="15" width="7.8" height="2.7" fill="#f4a818"/>
<rect x="19" y="5" width="1.2" height="12.6" fill="#909090"/></svg></div>
<span id="c8" style="position:absolute;left:319.1px;top:289px;font-size:15px;line-height:15px;color:#141414;font-weight:normal;letter-spacing:-0.270px;white-space:nowrap;">Display adapters</span>
<svg style="position:absolute;left:277px;top:316.1px" width="6" height="8" viewBox="0 0 6 8"><path d="M1 0.9 L4.2 3.8 L1 6.7" stroke="#a6a6a6" stroke-width="1.25" fill="none"/></svg>
<div style="position:absolute;left:293px;top:310px;line-height:0"><svg width="21" height="21" viewBox="0 0 21 21">
<rect x="1.6" y="0.8" width="17" height="7" fill="#e4e8ec" stroke="#8a929a" stroke-width="0.9"/>
<path d="M3 2.7 h14 M3 4.6 h14" stroke="#fafafa" stroke-width="1.1"/>
<path d="M3 2.7 h14 M3 4.6 h14" stroke="#9aa2aa" stroke-width="0.4" stroke-dasharray="1.4 0.6"/>
<path d="M1.4 7.4 L12 7.4 C12.8 9 12.6 15 11.6 17.6 L9.2 17.6 L8.4 12.8 L4 12.8 L3.2 17.6 L0.8 17.6 C-0.2 15 0 9 1.4 7.4 Z" fill="#4a525a"/>
<rect x="3.2" y="7.8" width="3.6" height="3" fill="#30a0f0"/>
<rect x="6.8" y="7.8" width="2.6" height="3" fill="#e8a030"/>
<rect x="8.2" y="9.4" width="1.6" height="1.8" fill="#e03030"/>
<rect x="14" y="7.2" width="6" height="10.8" rx="1.6" fill="#3a4048"/>
<rect x="15.2" y="8.6" width="3.6" height="8" rx="1" fill="#6a7a8a"/>
</svg></div>
<span id="c9" style="position:absolute;left:319.1px;top:311px;font-size:15px;line-height:15px;color:#141414;font-weight:normal;letter-spacing:-0.393px;white-space:nowrap;">Human Interface Devices</span>
<svg style="position:absolute;left:277px;top:338.6px" width="6" height="8" viewBox="0 0 6 8"><path d="M1 0.9 L4.2 3.8 L1 6.7" stroke="#a6a6a6" stroke-width="1.25" fill="none"/></svg>
<div style="position:absolute;left:293px;top:333px;line-height:0"><svg width="21" height="21" viewBox="0 0 21 21">
<path d="M2.2 4.8 L3.2 0.2 L18.6 0.2 L19.4 4.8 Z" fill="url(#gDisk)"/>
<rect x="2" y="4.6" width="17.4" height="4.8" rx="1" fill="#2e2e2e"/>
<path d="M13 5.6 L15 7.6 L11 7.6 Z" fill="#40d040"/>
<rect x="7.4" y="7.4" width="11.4" height="6.8" fill="#2a9a58" stroke="#1a7a40" stroke-width="0.6"/>
<rect x="11.2" y="9.6" width="3.4" height="3" fill="#303030"/>
<rect x="9" y="15" width="7.8" height="2.7" fill="#f4a818"/>
<rect x="19" y="5.5" width="1.2" height="12.6" fill="#909090"/></svg></div>
<span id="c10" style="position:absolute;left:319.1px;top:334px;font-size:15px;line-height:15px;color:#141414;font-weight:normal;letter-spacing:-0.630px;white-space:nowrap;">IDE ATA/ATAPI controllers</span>
<svg style="position:absolute;left:277px;top:361.1px" width="6" height="8" viewBox="0 0 6 8"><path d="M1 0.9 L4.2 3.8 L1 6.7" stroke="#a6a6a6" stroke-width="1.25" fill="none"/></svg>
<div style="position:absolute;left:293px;top:357px;line-height:0"><svg width="21" height="13" viewBox="0 0 21 13">
<rect x="0.6" y="0.6" width="18.8" height="10" fill="#a8b0b8" stroke="#8a929a" stroke-width="0.8"/>
<rect x="2" y="2" width="16" height="1.8" fill="#f8f8f8"/>
<rect x="2" y="4.6" width="16" height="1.8" fill="#f8f8f8"/>
<rect x="2" y="7.2" width="16" height="1.6" fill="#d8dce0"/>
<path d="M4 2 v6.8 M6.5 2 v6.8 M9 2 v6.8 M11.5 2 v6.8 M14 2 v6.8 M16.5 2 v6.8" stroke="#a8b0b8" stroke-width="0.5"/>
<rect x="0.2" y="10" width="19.6" height="2.2" fill="#262c34"/>
</svg></div>
<span id="c11" style="position:absolute;left:319.1px;top:357px;font-size:15px;line-height:15px;color:#141414;font-weight:normal;letter-spacing:-0.292px;white-space:nowrap;">Keyboards</span>
<svg style="position:absolute;left:277px;top:383.6px" width="6" height="8" viewBox="0 0 6 8"><path d="M1 0.9 L4.2 3.8 L1 6.7" stroke="#a6a6a6" stroke-width="1.25" fill="none"/></svg>
<div style="position:absolute;left:293px;top:378px;line-height:0"><svg width="21" height="15" viewBox="0 0 21 15">
<rect x="0.8" y="0.8" width="18.4" height="13" rx="0.8" fill="#c4daee" stroke="#707c88" stroke-width="1"/>
<rect x="14.5" y="1.4" width="4.2" height="11.8" fill="#a8bcd0"/>
<rect x="1.4" y="1.4" width="3" height="11.8" fill="#b4c8dc"/>
<path d="M1.4 12 L10 2 L14.5 2" stroke="#d8eaf8" stroke-width="1" fill="none" opacity="0.7"/>
<circle cx="2.1" cy="2.1" r="1.9" fill="#3a3a3a"/><circle cx="17.9" cy="2.1" r="2.1" fill="#333"/>
<circle cx="2.1" cy="12.5" r="1.9" fill="#3a3a3a"/><circle cx="17.9" cy="12.5" r="2.1" fill="#333"/>
</svg></div>
<span id="c12" style="position:absolute;left:319.1px;top:379px;font-size:15px;line-height:15px;color:#141414;font-weight:normal;letter-spacing:-0.082px;white-space:nowrap;">Memory technology devices</span>
<svg style="position:absolute;left:277px;top:406.1px" width="6" height="8" viewBox="0 0 6 8"><path d="M1 0.9 L4.2 3.8 L1 6.7" stroke="#a6a6a6" stroke-width="1.25" fill="none"/></svg>
<div style="position:absolute;left:293px;top:398px;line-height:0"><svg width="21" height="21" viewBox="0 0 21 21">
<rect x="4.6" y="0.7" width="11.2" height="18.6" rx="5.6" fill="#7a8ea4" stroke="#1e2226" stroke-width="1.3"/>
<rect x="6" y="2" width="8.4" height="16" rx="4.2" fill="#9cb0c4"/>
<rect x="9.2" y="2.7" width="2.1" height="8.8" rx="0.5" fill="#1e2226"/>
</svg></div>
<span id="c13" style="position:absolute;left:319.1px;top:401px;font-size:15px;line-height:15px;color:#141414;font-weight:normal;letter-spacing:-0.039px;white-space:nowrap;">Mice and other pointing devices</span>
<svg style="position:absolute;left:277px;top:428.6px" width="6" height="8" viewBox="0 0 6 8"><path d="M1 0.9 L4.2 3.8 L1 6.7" stroke="#a6a6a6" stroke-width="1.25" fill="none"/></svg>
<div style="position:absolute;left:293px;top:424px;line-height:0"><svg width="21" height="16" viewBox="0 0 21 16"><rect x="0.7" y="0.7" width="18.6" height="11.9" fill="url(#gMon)" stroke="#2a7cc0" stroke-width="1.2"/><rect x="5" y="13.7" width="10" height="1.4" fill="#8aa0bc"/></svg></div>
<span id="c14" style="position:absolute;left:319.1px;top:424px;font-size:15px;line-height:15px;color:#141414;font-weight:normal;letter-spacing:0.386px;white-space:nowrap;">Monitors</span>
<svg style="position:absolute;left:277px;top:451.1px" width="6" height="8" viewBox="0 0 6 8"><path d="M1 0.9 L4.2 3.8 L1 6.7" stroke="#a6a6a6" stroke-width="1.25" fill="none"/></svg>
<div style="position:absolute;left:293px;top:444px;line-height:0"><svg width="21" height="21" viewBox="0 0 21 21">
<rect x="0" y="15.2" width="19" height="3.2" fill="#e6e6e6"/>
<path d="M0 16.8 h19" stroke="#c8c8c8" stroke-width="0.6"/>
<rect x="4.8" y="14" width="9.4" height="4.8" rx="0.8" fill="#3cc040"/>
<rect x="5.6" y="1.1" width="13.8" height="8.4" fill="url(#gMon)" stroke="#2a7cc0" stroke-width="1.2"/><rect x="1.8" y="4.8" width="13.8" height="8.4" fill="url(#gMon)" stroke="#2a7cc0" stroke-width="1.2"/></svg></div>
<span id="c15" style="position:absolute;left:319.1px;top:447px;font-size:15px;line-height:15px;color:#141414;font-weight:normal;letter-spacing:-0.120px;white-space:nowrap;">Network adapters</span>
<svg style="position:absolute;left:275.5px;top:474.2px" width="8" height="6" viewBox="0 0 8 6"><path d="M0.8 1 L4 4.4 L7.2 1" stroke="#404040" stroke-width="1.5" fill="none"/></svg>
<div style="position:absolute;left:293px;top:467px;line-height:0"><svg width="21" height="18" viewBox="0 0 21 18">
<rect x="4" y="0" width="12" height="16.7" fill="#3c3e42"/>
<rect x="5.1" y="1.1" width="9.8" height="12" fill="url(#gMon)"/>
<rect x="5" y="13.8" width="10" height="2.2" fill="#a8acb0"/>
<path d="M6 14.9 h8" stroke="#70747a" stroke-width="0.5" stroke-dasharray="1.5 0.5"/>
</svg></div>
<span id="c16" style="position:absolute;left:319.1px;top:469px;font-size:15px;line-height:15px;color:#141414;font-weight:normal;letter-spacing:-0.444px;white-space:nowrap;">Portable Devices</span>
<div style="position:absolute;left:320px;top:489px;line-height:0"><svg width="18" height="19" viewBox="0 0 18 19">
<rect x="0.5" y="0.4" width="12.5" height="17" fill="#3c3e42"/>
<rect x="1.7" y="1.5" width="10.5" height="11.7" fill="url(#gMon)"/>
<rect x="1.6" y="14" width="4" height="3" fill="#a8acb0"/>
<path d="M10 5.2 L16.6 17.9 L3.4 17.9 Z" fill="#fff" opacity="0.9"/>
<path d="M10 6.4 L15.8 17.4 L4.2 17.4 Z" fill="url(#gGold)" stroke="#b07808" stroke-width="0.7"/>
<rect x="9.2" y="9.6" width="1.6" height="4.2" fill="#3a2a08"/>
<rect x="9.2" y="14.8" width="1.6" height="1.5" fill="#3a2a08"/>
</svg></div>
<span id="c17" style="position:absolute;left:342.28999999999985px;top:491px;font-size:15px;line-height:15px;color:#141414;font-weight:normal;letter-spacing:-0.570px;white-space:nowrap;">Pixel 3</span>
<svg style="position:absolute;left:277px;top:518.6px" width="6" height="8" viewBox="0 0 6 8"><path d="M1 0.9 L4.2 3.8 L1 6.7" stroke="#a6a6a6" stroke-width="1.25" fill="none"/></svg>
<div style="position:absolute;left:293px;top:514px;line-height:0"><svg width="21" height="14" viewBox="0 0 21 14">
<rect x="5" y="0.2" width="10.2" height="3.6" rx="0.8" fill="#2a90e8"/>
<rect x="9" y="0.2" width="2.4" height="3.6" fill="#20c040"/>
<rect x="0.5" y="2.2" width="19.2" height="10.2" rx="0.6" fill="#cfd2d6" stroke="#6e7276" stroke-width="0.8"/>
<rect x="0.5" y="2.4" width="2" height="10" fill="#6a6e72"/>
<rect x="17.7" y="2.4" width="2" height="10" fill="#6a6e72"/>
<rect x="15.8" y="2.8" width="2" height="1.2" fill="#30d030"/>
<rect x="4.3" y="6.9" width="11.5" height="2.1" fill="#1e2226"/>
<rect x="5.3" y="9" width="9.4" height="4.2" fill="#fcfcfc" stroke="#c0c0c0" stroke-width="0.4"/>
</svg></div>
<span id="c18" style="position:absolute;left:319.1px;top:514px;font-size:15px;line-height:15px;color:#141414;font-weight:normal;letter-spacing:-0.221px;white-space:nowrap;">Print queues</span>
<svg style="position:absolute;left:277px;top:541.1px" width="6" height="8" viewBox="0 0 6 8"><path d="M1 0.9 L4.2 3.8 L1 6.7" stroke="#a6a6a6" stroke-width="1.25" fill="none"/></svg>
<div style="position:absolute;left:293px;top:533px;line-height:0"><svg width="21" height="21" viewBox="0 0 21 21">
<rect x="0.6" y="0.4" width="19.4" height="18.8" fill="none" stroke="#e8b860" stroke-width="1" stroke-dasharray="0.8 1.2"/>
<rect x="1.4" y="1.2" width="17.8" height="17.2" fill="#2e6e50"/>
<rect x="2.4" y="2.2" width="15.8" height="15.2" fill="#3a8060"/>
<rect x="4.8" y="4.6" width="10.4" height="10.4" fill="#e4e4e4"/>
<path d="M4.8 4.6 L15.2 4.6 L4.8 15 Z" fill="#f4f4f4"/>
<path d="M15.2 4.6 L15.2 15 L4.8 15" stroke="#c0c0c0" stroke-width="0.8" fill="none"/>
</svg></div>
<span id="c19" style="position:absolute;left:319.1px;top:537px;font-size:15px;line-height:15px;color:#141414;font-weight:normal;letter-spacing:-0.820px;white-space:nowrap;">Processors</span>
<svg style="position:absolute;left:277px;top:563.6px" width="6" height="8" viewBox="0 0 6 8"><path d="M1 0.9 L4.2 3.8 L1 6.7" stroke="#a6a6a6" stroke-width="1.25" fill="none"/></svg>
<div style="position:absolute;left:293px;top:557px;line-height:0"><svg width="21" height="21" viewBox="0 0 21 21"><rect x="3.8" y="0.6" width="8" height="14.6" fill="#3a3a3a"/><rect x="5.9" y="3.7" width="3.4" height="2.6" rx="0.8" fill="#30e030"/><path d="M2.1999999999999997 18.8 L4.2 15.7 L11.399999999999999 15.7 L13.399999999999999 18.8 Z" fill="#2a2a2a"/>
<circle cx="16.2" cy="7.3" r="3.6" fill="url(#gGold)" stroke="#c89020" stroke-width="0.7"/>
<ellipse cx="16.2" cy="6" rx="1.6" ry="1" fill="#fffbe8"/>
<path d="M14.7 10.5 L17.8 10.5 L17.8 17.6 L16.2 18.4 L14.7 17.6 Z" fill="#e0a830"/>
</svg></div>
<span id="c20" style="position:absolute;left:319.1px;top:559px;font-size:15px;line-height:15px;color:#141414;font-weight:normal;letter-spacing:-0.444px;white-space:nowrap;">Security devices</span>
<svg style="position:absolute;left:277px;top:586.1px" width="6" height="8" viewBox="0 0 6 8"><path d="M1 0.9 L4.2 3.8 L1 6.7" stroke="#a6a6a6" stroke-width="1.25" fill="none"/></svg>
<div style="position:absolute;left:293px;top:578px;line-height:0"><svg width="21" height="21" viewBox="0 0 21 21"><rect x="5" y="2.5" width="8" height="14.6" fill="#3a3a3a"/><rect x="7.1" y="5.6" width="3.4" height="2.6" rx="0.8" fill="#30e030"/><path d="M3.4 20.7 L5.4 17.6 L12.6 17.6 L14.6 20.7 Z" fill="#2a2a2a"/>
<path d="M12.6 3.8 L14.8 3.8 L14.8 0 L17.4 0 L17.4 3.8 L19.9 3.8 L19.9 9.8 L12.6 9.8 Z" fill="#2a7ed8"/>
<path d="M12.6 6.8 L14 6.8 M18.2 6.8 L19.9 6.8" stroke="#8ac0f0" stroke-width="1.4"/>
</svg></div>
<span id="c21" style="position:absolute;left:319.1px;top:581px;font-size:15px;line-height:15px;color:#141414;font-weight:normal;letter-spacing:-0.190px;white-space:nowrap;">Software components</span>
<svg style="position:absolute;left:277px;top:608.6px" width="6" height="8" viewBox="0 0 6 8"><path d="M1 0.9 L4.2 3.8 L1 6.7" stroke="#a6a6a6" stroke-width="1.25" fill="none"/></svg>
<div style="position:absolute;left:293px;top:602px;line-height:0"><svg width="21" height="21" viewBox="0 0 21 21"><rect x="6" y="0.6" width="8" height="14.6" fill="#3a3a3a"/><rect x="8.1" y="3.7" width="3.4" height="2.6" rx="0.8" fill="#30e030"/><path d="M4.4 18.8 L6.4 15.7 L13.6 15.7 L15.6 18.8 Z" fill="#2a2a2a"/></svg></div>
<span id="c22" style="position:absolute;left:319.1px;top:604px;font-size:15px;line-height:15px;color:#141414;font-weight:normal;letter-spacing:-0.450px;white-space:nowrap;">Software devices</span>
<svg style="position:absolute;left:277px;top:631.1px" width="6" height="8" viewBox="0 0 6 8"><path d="M1 0.9 L4.2 3.8 L1 6.7" stroke="#a6a6a6" stroke-width="1.25" fill="none"/></svg>
<div style="position:absolute;left:293px;top:623px;line-height:0"><svg width="21" height="21" viewBox="0 0 21 21">
<rect x="3.8" y="5.2" width="4.2" height="10" fill="url(#gSpkB)"/>
<path d="M7.9 5.2 L14.6 0.1 L15 0.1 L15 19.9 L14.6 19.9 L7.9 15.2 Z" fill="url(#gSpk)"/>
<rect x="14.2" y="0.1" width="0.9" height="19.8" fill="#8a9096"/>
</svg></div>
<span id="c23" style="position:absolute;left:319.1px;top:627px;font-size:15px;line-height:15px;color:#141414;font-weight:normal;letter-spacing:-0.160px;white-space:nowrap;">Sound, video and game controllers</span>
<svg style="position:absolute;left:277px;top:653.6px" width="6" height="8" viewBox="0 0 6 8"><path d="M1 0.9 L4.2 3.8 L1 6.7" stroke="#a6a6a6" stroke-width="1.25" fill="none"/></svg>
<div style="position:absolute;left:293px;top:647px;line-height:0"><svg width="21" height="21" viewBox="0 0 21 21">
<path d="M6.6 0.8 L11.6 5.4 L6.6 10 L1.6 5.4 Z" fill="#fafafa" stroke="#2a2a2a" stroke-width="1.4"/>
<rect x="6.4" y="4.8" width="6.2" height="1.5" fill="#2a2a2a"/>
<rect x="1.7" y="10.8" width="5.8" height="3.9" fill="#3a3a3a"/>
<rect x="7.4" y="8.4" width="11.4" height="6.8" fill="#2a9a58" stroke="#1a7a40" stroke-width="0.6"/>
<rect x="11.2" y="10.2" width="3.4" height="3" fill="#303030"/>
<rect x="8.7" y="15.6" width="7.8" height="2.7" fill="#f4a818"/>
<rect x="19" y="5.5" width="1.2" height="12.6" fill="#909090"/></svg></div>
<span id="c24" style="position:absolute;left:319.1px;top:649px;font-size:15px;line-height:15px;color:#141414;font-weight:normal;letter-spacing:-0.175px;white-space:nowrap;">Storage controllers</span>
<svg style="position:absolute;left:277px;top:676.1px" width="6" height="8" viewBox="0 0 6 8"><path d="M1 0.9 L4.2 3.8 L1 6.7" stroke="#a6a6a6" stroke-width="1.25" fill="none"/></svg>
<div style="position:absolute;left:293px;top:669px;line-height:0"><svg width="21" height="18" viewBox="0 0 21 18">
<rect x="0.1" y="0.5" width="8.9" height="16" fill="#3a3a3a"/>
<rect x="1.6" y="1.4" width="2.6" height="1.6" fill="#30d030"/>
<rect x="0.8" y="4" width="7.4" height="1.4" fill="#b8b8b8"/>
<rect x="0.8" y="6.4" width="7.4" height="1.2" fill="#b8b8b8"/>
<rect x="5.4" y="5.8" width="13.9" height="8.6" fill="url(#gMon)" stroke="#2a7cc0" stroke-width="1.2"/><rect x="9.5" y="15.6" width="6" height="1.2" fill="#4a7ab8"/></svg></div>
<span id="c25" style="position:absolute;left:319.1px;top:671px;font-size:15px;line-height:15px;color:#141414;font-weight:normal;letter-spacing:-0.561px;white-space:nowrap;">System devices</span>
<svg style="position:absolute;left:277px;top:698.6px" width="6" height="8" viewBox="0 0 6 8"><path d="M1 0.9 L4.2 3.8 L1 6.7" stroke="#a6a6a6" stroke-width="1.25" fill="none"/></svg>
<div style="position:absolute;left:293px;top:690px;line-height:0"><svg width="21" height="21" viewBox="0 0 21 21">
<rect x="6.6" y="1.2" width="5.6" height="4.8" fill="#e8e8e8" stroke="#3a3a3a" stroke-width="0.8"/>
<rect x="7.8" y="2.2" width="1.2" height="1.2" fill="#3a3a3a"/><rect x="10" y="2.2" width="1.2" height="1.2" fill="#3a3a3a"/>
<path d="M5 5.9 L14 5.9 L14 12.6 L11.3 15.2 L7.6 15.2 L5 12.6 Z" fill="#3e4042"/>
<rect x="7" y="7" width="5" height="6" rx="1.5" fill="#6a6c6e"/>
<rect x="7.5" y="15" width="3.8" height="5.4" fill="#3e4042"/>
</svg></div>
<span id="c26" style="position:absolute;left:319.1px;top:694px;font-size:15px;line-height:15px;color:#141414;font-weight:normal;letter-spacing:-0.305px;white-space:nowrap;">Universal Serial Bus controllers</span>
<div style="position:absolute;left:985px;top:102px;width:5px;height:751px;background:#f0f0f0"></div>
<div style="position:absolute;left:990px;top:102px;width:235px;height:751px;border-top:3px solid #7c7c7c;border-left:2px solid #808080;border-bottom:1px solid #e6e6e6;border-right:1px solid #ececec;box-sizing:border-box;background:#fff"></div>
<div style="position:absolute;left:992px;top:105px;width:232px;height:24px;background:#f0f0f0;border-top:1px solid #fff;box-sizing:border-box"></div>
<div style="position:absolute;left:992px;top:129px;width:232px;height:2px;background:#c8c8c8"></div>
<div style="position:absolute;left:992px;top:131px;width:232px;height:1px;background:#fff"></div>
<div style="position:absolute;left:992px;top:132px;width:232px;height:31px;background:linear-gradient(#bcd4ea,#94b2d0)"></div>
<span id="a0" style="position:absolute;left:998.6400000000006px;top:112px;font-size:15px;line-height:15px;color:#141414;font-weight:bold;letter-spacing:-0.645px;white-space:nowrap;">Actions</span>
<span id="a1" style="position:absolute;left:1000.8299999999997px;top:141px;font-size:15px;line-height:15px;color:#1a1a1a;font-weight:normal;letter-spacing:-0.263px;white-space:nowrap;">Device Manager</span>
<svg style="position:absolute;left:1204px;top:144px" width="14" height="8" viewBox="0 0 14 8"><path d="M0.5 7.5 L7 0.5 L13.5 7.5 Z" fill="#000"/></svg>
<span id="a2" style="position:absolute;left:1031.369999999999px;top:171px;font-size:15px;line-height:15px;color:#141414;font-weight:normal;letter-spacing:-0.025px;white-space:nowrap;">More Actions</span>
<svg style="position:absolute;left:1208px;top:171px" width="7" height="13" viewBox="0 0 7 13"><path d="M0 0 L7 6.5 L0 13 Z" fill="#000"/></svg>
<div style="position:absolute;left:0px;top:853px;width:1226px;height:29px;background:#efefef"></div>
<div style="position:absolute;left:952px;top:856px;width:1px;height:26px;background:#e0e0e0"></div>
<div style="position:absolute;left:1118px;top:856px;width:1px;height:26px;background:#e0e0e0"></div>
<div style="position:absolute;left:1224px;top:856px;width:1px;height:26px;background:#e4e4e4"></div>
<div style="position:absolute;left:28px;top:264px;width:208px;height:39px;background:#0f8569"></div>
<div style="position:absolute;left:37px;top:273px;width:190px;height:21px;background:#d9d9d9;overflow:hidden"></div>
<div style="position:absolute;left:37px;top:273px;width:5px;height:21px;background:#fafafa"></div>
<div style="position:absolute;left:37px;top:273px;width:190px;height:21px;overflow:hidden"><div style="position:absolute;left:8px;top:-1px;line-height:0;opacity:0.8"><svg width="27.3" height="27.3" viewBox="0 0 21 21">
<rect x="7.8" y="0.6" width="6.8" height="8.6" fill="#3a3a3a"/>
<rect x="10.2" y="2.4" width="1.8" height="1.8" fill="#30d030"/>
<path d="M4.5 10 L6.8 8.6 L15.6 8.6 L17.8 10 Z" fill="#6a6a6a"/>
<rect x="1.4" y="9.8" width="16.4" height="9.8" fill="#dcdcdc" stroke="#a8a8a8" stroke-width="0.9"/>
<rect x="2" y="10.4" width="15.2" height="1.4" fill="#f2f2f2"/>
<rect x="4" y="12.6" width="2" height="4" fill="#2a2a2a"/>
<rect x="13" y="12.6" width="2" height="4" fill="#2a2a2a"/>
</svg></div><span id="ov" style="position:absolute;left:43.04px;top:2px;font-size:21px;line-height:21px;color:#383838;letter-spacing:-1.038px;white-space:nowrap">Device Manager</span></div>
</body></html>
